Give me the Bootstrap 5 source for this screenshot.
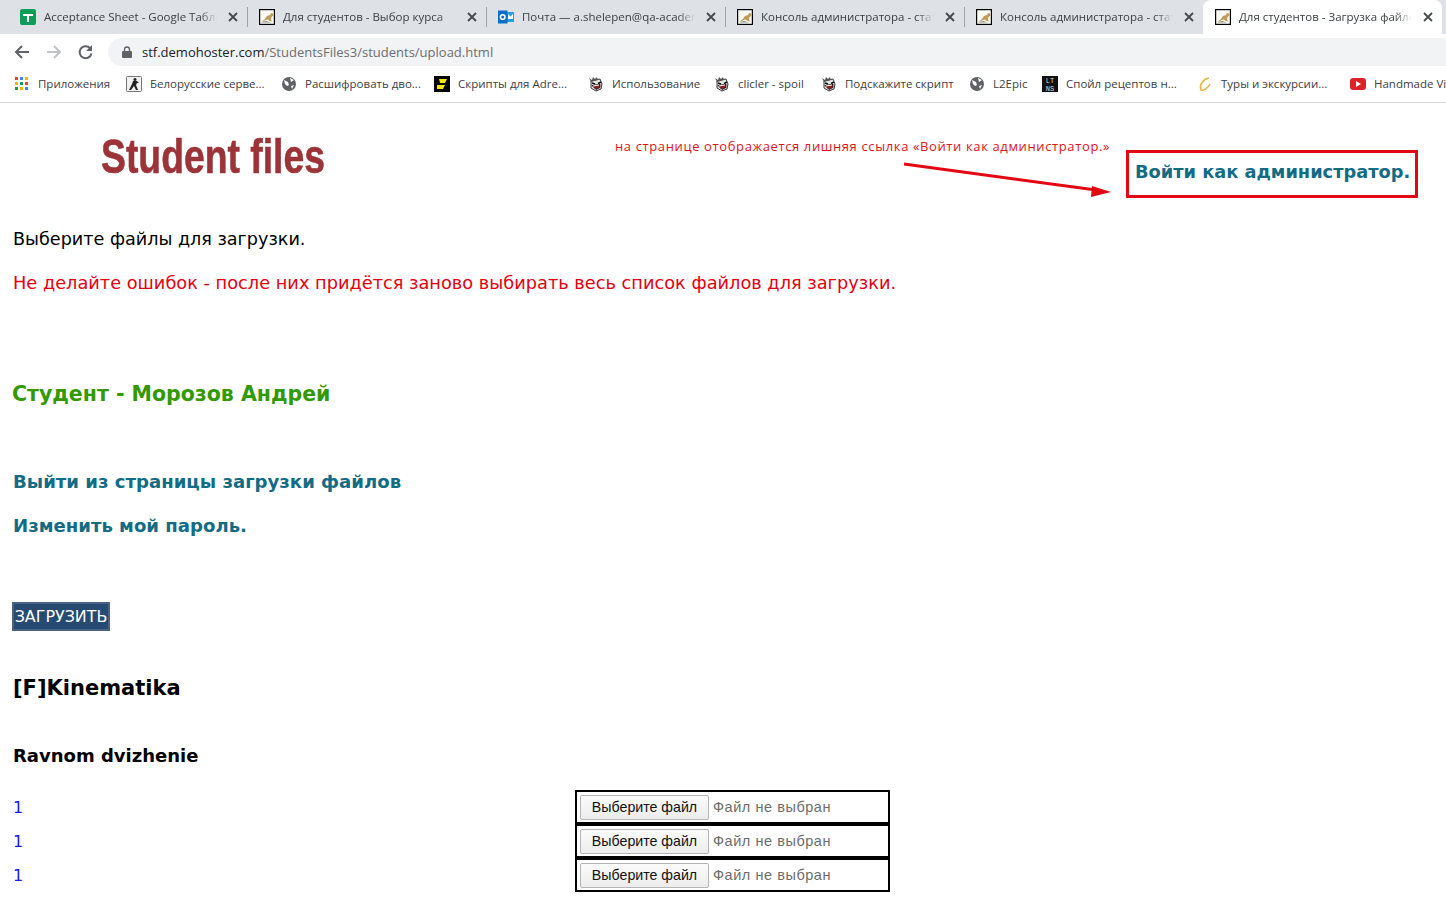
<!doctype html>
<html lang="ru">
<head>
    <meta charset="utf-8">
    <meta name="viewport" content="width=device-width, initial-scale=1">
    <title>Для студентов - Загрузка файлов</title>
    <link href="https://cdn.jsdelivr.net/npm/bootstrap@5.3.3/dist/css/bootstrap.min.css" rel="stylesheet">
    <style>
        html, body { height: 100%; overflow: hidden; }
        body { font-family: "DejaVu Sans", sans-serif; color: #000; background: #fff; }
        .browser-ui { font-family: "Open Sans", "Noto Sans", sans-serif; font-size: 11.5px; color: #3c4043; }
        .tab-strip { height: 34px; background: #dee1e6; padding-left: 8px; }
        .tab-item { width: 239px; height: 34px; padding: 0 6px 0 12px; gap: 8px; position: relative; flex: none; }
        .tab-item + .tab-item::before { content: ""; position: absolute; left: 0; top: 7px; height: 20px; width: 1px; background: #9fa3a8; }
        .tab-item.tab-open { background: #fff; border-radius: 8px 8px 0 0; }
        .tab-item.tab-open::before { display: none; }
        .tab-title { flex: 1; white-space: nowrap; overflow: hidden; -webkit-mask-image: linear-gradient(90deg, #000 90%, transparent); mask-image: linear-gradient(90deg, #000 90%, transparent); }
        .tab-close { width: 16px; flex: none; }
        .tool-strip { height: 32px; background: #fff; padding: 4px 0 0 14px; gap: 16px; }
        .url-box { margin-left: -2px; flex: 1; height: 28px; background: #f1f3f4; border-radius: 14px 0 0 14px; padding-left: 14px; gap: 10px; font-size: 13px; color: #202124; }
        .url-box > span { padding-top: 2px; }
        .url-box span span { color: #6b6f73; }
        .mark-strip { height: 37px; background: #fff; border-bottom: 1px solid #d2d4d7; padding-left: 15px; white-space: nowrap; overflow: hidden; }
        .mark-item { gap: 8px; flex: none; }
        .page-head { height: 124px; padding: 30px 0 0 99px; }
        .logo-text { font-family: "Liberation Sans", sans-serif; font-weight: 700; font-size: 48px; fill: #9c3338; stroke: #9c3338; stroke-width: .6px; filter: blur(.6px); }
        .note-text { position: absolute; left: 615px; top: 34px; font-family: "Open Sans", sans-serif; font-size: 13px; letter-spacing: .62px; color: #e0131c; white-space: nowrap; }
        .note-arrow { position: absolute; left: 900px; top: 55px; }
        .admin-box { position: absolute; left: 1126px; top: 47px; width: 292px; height: 48px; border: 3px solid #e30613; padding-left: 6px; font-size: 17.8px; font-weight: 700; line-height: 38px; color: #146b84; white-space: nowrap; text-decoration: none; }
        .page-body { padding-left: 13px; }
        .line-text { font-size: 17.6px; line-height: 24px; margin: 0; }
        .warn-text { color: #e4000f; font-size: 17.75px; margin-top: 20px; }
        .student-name { color: #339900; font-size: 20.5px; font-weight: 700; line-height: 28px; margin: 85px 0 0 -1px; }
        .nav-link-teal { display: block; color: #146b84; font-size: 18.1px; font-weight: 700; line-height: 24px; text-decoration: none; }
        .upload-btn { display: block; background: #264a72; color: #fff; border: 2px solid #4b6285; border-radius: 0; padding: 0; width: 98px; height: 29px; font-size: 15.9px; line-height: 25px; font-family: "DejaVu Sans", sans-serif; margin: 64px 0 0 -1px; }
        .course-title { font-size: 21px; font-weight: 700; line-height: 28px; margin: 43px 0 0; color: #000; }
        .topic-title { font-size: 18px; font-weight: 700; line-height: 24px; margin: 42px 0 0; color: #000; }
        .file-list { margin-top: 23px; }
        .file-row { height: 34px; }
        .file-num { width: 562px; color: #1a1ae0; font-size: 16px; flex: none; }
        .file-cell { width: 315px; height: 34px; margin-top: -2px; border: 2px solid #000; padding-left: 3px; gap: 4px; font-family: "Liberation Sans", sans-serif; font-size: 14.5px; letter-spacing: .55px; color: #6d6d6d; }
        .file-cell span { padding-top: 2px; }
        .file-pick { width: 129px; height: 25px; padding: 0; border: 1px solid #b4b4b4; border-radius: 2px; background: linear-gradient(#fbfbfb, #ececec); color: #111; font-size: 14.2px; letter-spacing: 0; line-height: 23px; }
        svg { flex: none; display: block; }
    </style>
</head>
<body>
    <svg width="0" height="0" class="position-absolute">
        <symbol id="ico-close" viewBox="0 0 16 10"><path d="M4 1l8 8M12 1l-8 8" stroke="#45494d" stroke-width="1.8"/></symbol>
        <symbol id="ico-cat" viewBox="0 0 16 16"><rect x=".6" y=".6" width="14.800" height="14.800" fill="#fbfaf4" stroke="#000" stroke-width="1.200"/><path d="M2.500 12.500l3-2 2.500-3.500 3-1 1-2 2 .5.500 2-2 1.500-.5 3 1.500 1.500-3-.5-1.500-1.500-2.500.5-2 1.500z" fill="#bf9c58"/><path d="M2 13.500l5-1.500 5 1.500z" fill="#8b8f80"/></symbol>
        <symbol id="ico-globe" viewBox="0 0 16 16"><circle cx="8" cy="8" r="7" fill="#5f6368"/><path d="M3 4l4 2 1 3-2 1-2-2zM9 2l4 2-3 2zM10 10l3-1-2 4z" fill="#fff"/></symbol>
        <symbol id="ico-face" viewBox="0 0 16 16"><path d="M3 5l9-2 2 5-1 5-5 2-5-3z" fill="#e6e6e6" stroke="#3a3a3a"/><path d="M1 2l3 2 1-3 2 2 2-2 1 3-7 2z" fill="#555"/><path d="M4 7l3 1M13 6l-3 1.500" stroke="#111" stroke-width="1.500"/><path d="M4 9.500l8-1.500 0 3.500-4 2z" fill="#8e1b1b" stroke="#111" stroke-width=".8"/><path d="M5 10l6-1" stroke="#fff"/></symbol>
    </svg>

    <div class="browser-ui">
        <div class="tab-strip d-flex">
            <div class="tab-item d-flex align-items-center">
                <svg width="16" height="16" viewBox="0 0 16 16"><rect width="16" height="16" rx="2" fill="#0f9d58"/><path d="M3 5h10v2H9v6H7V7H3z" fill="#fff"/></svg>
                <span class="tab-title">Acceptance Sheet - Google Таблицы</span>
                <svg class="tab-close" height="10"><use href="#ico-close"/></svg>
            </div>
            <div class="tab-item d-flex align-items-center">
                <svg width="16" height="16"><use href="#ico-cat"/></svg>
                <span class="tab-title">Для студентов - Выбор курса</span>
                <svg class="tab-close" height="10"><use href="#ico-close"/></svg>
            </div>
            <div class="tab-item d-flex align-items-center">
                <svg width="16" height="16" viewBox="0 0 16 16"><rect x="9" y="3" width="7" height="10" fill="#2a9be0"/><path d="M10 5l2.500 2.500L15 5v5h-5z" fill="#fff"/><rect y="1.500" width="9.500" height="13" fill="#0a6fc2"/><circle cx="4.700" cy="8" r="2.300" fill="none" stroke="#fff" stroke-width="1.600"/></svg>
                <span class="tab-title">Почта — a.shelepen@qa-academy.by</span>
                <svg class="tab-close" height="10"><use href="#ico-close"/></svg>
            </div>
            <div class="tab-item d-flex align-items-center">
                <svg width="16" height="16"><use href="#ico-cat"/></svg>
                <span class="tab-title">Консоль администратора - статистика</span>
                <svg class="tab-close" height="10"><use href="#ico-close"/></svg>
            </div>
            <div class="tab-item d-flex align-items-center">
                <svg width="16" height="16"><use href="#ico-cat"/></svg>
                <span class="tab-title">Консоль администратора - статистика</span>
                <svg class="tab-close" height="10"><use href="#ico-close"/></svg>
            </div>
            <div class="tab-item tab-open d-flex align-items-center">
                <svg width="16" height="16"><use href="#ico-cat"/></svg>
                <span class="tab-title">Для студентов - Загрузка файлов</span>
                <svg class="tab-close" height="10"><use href="#ico-close"/></svg>
            </div>
        </div>
        <div class="tool-strip d-flex align-items-center">
            <svg width="16" height="16" viewBox="0 0 16 16"><path d="M15 8H2M8 2L2 8l6 6" fill="none" stroke="#5f6368" stroke-width="2"/></svg>
            <svg width="16" height="16" viewBox="0 0 16 16"><path d="M1 8h13M8 2l6 6-6 6" fill="none" stroke="#c0c3c7" stroke-width="2"/></svg>
            <svg width="16" height="16" viewBox="0 0 16 16"><path d="M13.500 9.500A6 6 0 1 1 12 4" fill="none" stroke="#5f6368" stroke-width="2"/><path d="M14 1v6H8z" fill="#5f6368"/></svg>
            <div class="url-box d-flex align-items-center">
                <svg width="10" height="12" viewBox="0 0 10 12"><rect y="5" width="10" height="7" rx="1" fill="#5f6368"/><path d="M2.500 5V3.500a2.500 2.500 0 0 1 5 0V5" fill="none" stroke="#5f6368" stroke-width="1.300"/></svg>
                <span>stf.demohoster.com<span>/StudentsFiles3/students/upload.html</span></span>
            </div>
        </div>
        <div class="mark-strip d-flex align-items-center">
            <div class="mark-item d-flex align-items-center" style="width:111px">
                <svg width="15" height="14" viewBox="0 0 15 14"><rect width="3" height="3" fill="#db4437"/><rect x="5" width="3" height="3" fill="#4285f4"/><rect x="10" width="3" height="3" fill="#f4b400"/><rect y="5" width="3" height="3" fill="#f4b400"/><rect x="5" y="5" width="3" height="3" fill="#0f9d58"/><rect x="10" y="5" width="3" height="3" fill="#db4437"/><rect y="10" width="3" height="3" fill="#0f9d58"/><rect x="5" y="10" width="3" height="3" fill="#f4b400"/><rect x="10" y="10" width="3" height="3" fill="#4285f4"/></svg>
                <span>Приложения</span>
            </div>
            <div class="mark-item d-flex align-items-center" style="width:155px">
                <svg width="16" height="16" viewBox="0 0 16 16"><rect x=".5" y=".5" width="15" height="15" rx="1" fill="#f2f2f2" stroke="#777"/><circle cx="9" cy="3.500" r="1.500" fill="#222"/><path d="M7 5h4l2 2-2 0-1 2 2 5h-2l-2-4-3 4H3l3-6z" fill="#222"/></svg>
                <span>Белорусские серве...</span>
            </div>
            <div class="mark-item d-flex align-items-center" style="width:153px">
                <svg width="16" height="16"><use href="#ico-globe"/></svg>
                <span>Расшифровать дво...</span>
            </div>
            <div class="mark-item d-flex align-items-center" style="width:154px">
                <svg width="16" height="16" viewBox="0 0 16 16"><rect width="16" height="16" fill="#000"/><path d="M5 3h8l-2 4H6zM3 9h8l-2 4H3z" fill="#f5e400"/></svg>
                <span>Скрипты для Adre...</span>
            </div>
            <div class="mark-item d-flex align-items-center" style="width:126px">
                <svg width="16" height="16"><use href="#ico-face"/></svg>
                <span>Использование</span>
            </div>
            <div class="mark-item d-flex align-items-center" style="width:107px">
                <svg width="16" height="16"><use href="#ico-face"/></svg>
                <span>clicler - spoil</span>
            </div>
            <div class="mark-item d-flex align-items-center" style="width:148px">
                <svg width="16" height="16"><use href="#ico-face"/></svg>
                <span>Подскажите скрипт</span>
            </div>
            <div class="mark-item d-flex align-items-center" style="width:73px">
                <svg width="16" height="16"><use href="#ico-globe"/></svg>
                <span>L2Epic</span>
            </div>
            <div class="mark-item d-flex align-items-center" style="width:155px">
                <svg width="16" height="16" viewBox="0 0 16 16"><rect width="16" height="16" fill="#111"/><text x="8" y="7" text-anchor="middle" font-family="Liberation Mono, monospace" font-size="7" fill="#ddd">LT</text><text x="8" y="14.500" text-anchor="middle" font-family="Liberation Mono, monospace" font-size="7" fill="#ddd">NS</text></svg>
                <span>Спойл рецептов н...</span>
            </div>
            <div class="mark-item d-flex align-items-center" style="width:153px">
                <svg width="16" height="16" viewBox="0 0 16 16"><path d="M12 2C6 3 2 9 4 14c3 1 7-2 9-6" fill="none" stroke="#e5b64a" stroke-width="1.600"/></svg>
                <span>Туры и экскурсии...</span>
            </div>
            <div class="mark-item d-flex align-items-center">
                <svg width="16" height="12" viewBox="0 0 16 12"><rect width="16" height="12" rx="3" fill="#d9252a"/><path d="M6 3l5 3-5 3z" fill="#fff"/></svg>
                <span>Handmade Videos</span>
            </div>
        </div>
    </div>

    <div class="page-head position-relative">
        <svg width="230" height="50" viewBox="0 0 230 50"><text class="logo-text" x="2" y="40" textLength="224" lengthAdjust="spacingAndGlyphs">Student files</text></svg>
        <div class="note-text">на странице отображается лишняя ссылка «Войти как администратор.»</div>
        <svg class="note-arrow" width="215" height="40" viewBox="0 0 215 40"><path d="M4 6L196 32" stroke="#e30613" stroke-width="3"/><path d="M211 34l-19-6-1 11z" fill="#e30613"/></svg>
        <a class="admin-box" href="#">Войти как администратор.</a>
    </div>

    <div class="page-body">
        <p class="line-text">Выберите файлы для загрузки.</p>
        <p class="line-text warn-text">Не делайте ошибок - после них придётся заново выбирать весь список файлов для загрузки.</p>
        <p class="student-name">Студент - Морозов Андрей</p>
        <a class="nav-link-teal" href="#" style="margin-top:62px">Выйти из страницы загрузки файлов</a>
        <a class="nav-link-teal" href="#" style="margin-top:20px">Изменить мой пароль.</a>
        <button class="upload-btn" type="button">ЗАГРУЗИТЬ</button>
        <h3 class="course-title">[F]Kinematika</h3>
        <h4 class="topic-title">Ravnom dvizhenie</h4>
        <div class="file-list">
            <div class="file-row d-flex align-items-center">
                <div class="file-num">1</div>
                <div class="file-cell d-flex align-items-center"><button class="file-pick" type="button">Выберите файл</button><span>Файл не выбран</span></div>
            </div>
            <div class="file-row d-flex align-items-center">
                <div class="file-num">1</div>
                <div class="file-cell d-flex align-items-center"><button class="file-pick" type="button">Выберите файл</button><span>Файл не выбран</span></div>
            </div>
            <div class="file-row d-flex align-items-center">
                <div class="file-num">1</div>
                <div class="file-cell d-flex align-items-center"><button class="file-pick" type="button">Выберите файл</button><span>Файл не выбран</span></div>
            </div>
        </div>
    </div>

    <script src="https://cdn.jsdelivr.net/npm/bootstrap@5.3.3/dist/js/bootstrap.bundle.min.js"></script>
</body>
</html>
